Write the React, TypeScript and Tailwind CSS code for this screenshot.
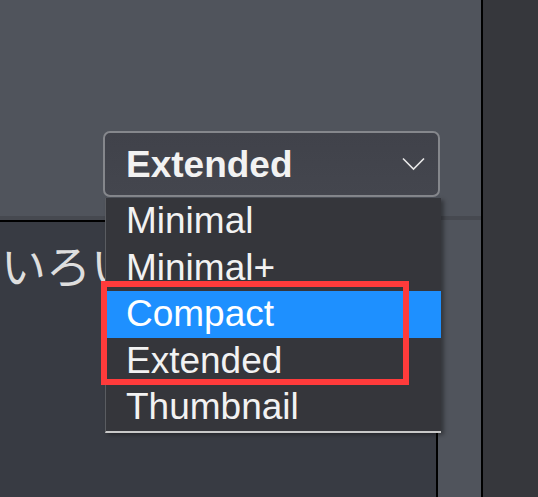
import React from "react";

const items = ["Minimal", "Minimal+", "Compact", "Extended", "Thumbnail"];
const heights = ["h-[47px]", "h-[46px]", "h-[47px]", "h-[46px]", "h-[47px]"];

export default function App() {
  return (
    <div
      className="relative w-[538px] h-[497px] flex overflow-hidden"
      style={{ fontFamily: '"Liberation Sans", Arial, sans-serif' }}
    >
      {/* main area */}
      <div className="w-[481px] h-full bg-[#50545c] flex flex-col">
        <div className="h-[216px] shrink-0 pl-[103px] pt-[131px]">
          <div className="w-[337px] h-[66px] rounded-[7px] border-2 border-[#85878c] bg-gradient-to-b from-[#40424a] to-[#44464e] flex items-center justify-between pl-[21px] pr-[13px]">
            <span className="text-[37px] font-bold text-[#f2f2f2] leading-none">Extended</span>
            <svg width="23" height="14" viewBox="0 0 23 14" fill="none">
              <polyline points="1,1.5 11.5,12 22,1.5" stroke="#e8e8e8" strokeWidth="1.6" />
            </svg>
          </div>
        </div>
        <div className="h-[4px] shrink-0 bg-[#464950]" />
        <div className="flex-1 w-[438px] border-t-2 border-r-2 border-black bg-[#383b43] pt-[20px] pl-[1px]">
          <div className="w-[104px] overflow-hidden">
            <div
              className="text-[45px] leading-none text-[#dedede] whitespace-nowrap"
              style={{ fontFamily: '"Noto Sans CJK JP", sans-serif' }}
            >
              いろい
            </div>
          </div>
        </div>
      </div>
      <div className="w-[2px] h-full bg-black" />
      <div className="flex-1 h-full bg-[#36373c]" />

      {/* dropdown list */}
      <div className="absolute left-[105px] top-[198px] w-[336px] bg-[#35363b] border-l border-[#5a5c61] border-b-2 border-b-[#c8c8c8] shadow-[3px_2px_4px_rgba(0,0,0,0.35)] flex flex-col">
        {items.map((it, i) => (
          <div
            key={it}
            className={`${heights[i]} flex items-center pl-[20px] text-[37px] leading-none text-[#f2f2f2] ${
              i === 2 ? "bg-[#1e90ff] text-white" : ""
            }`}
          >
            <span className="-mt-[2px]">{it}</span>
          </div>
        ))}
      </div>

      {/* red annotation */}
      <div className="absolute left-[101px] top-[281px] w-[308px] h-[104px] border-[6px] border-[#ff3b3b]" />
    </div>
  );
}
